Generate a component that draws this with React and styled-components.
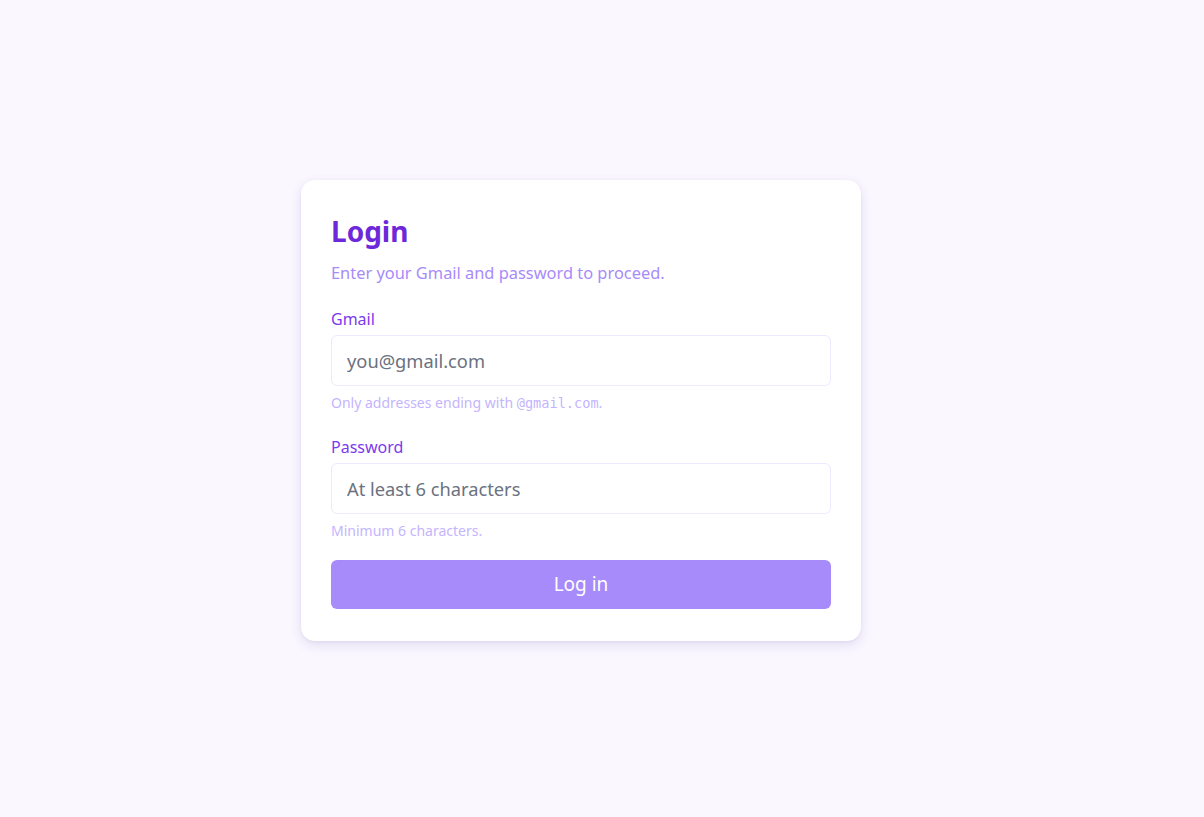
import React from "react";
import styled, { createGlobalStyle } from "styled-components";

const GlobalStyle = createGlobalStyle`
  html, body {
    margin: 0;
    padding: 0;
    background: #faf7ff;
    font-family: "Noto Sans", "Open Sans", sans-serif;
  }
  * { box-sizing: border-box; }
`;

const Page = styled.div`
  min-height: 817px;
  display: flex;
  align-items: center;
  justify-content: center;
  padding: 3px 42px 0 0;
`;

const Card = styled.form`
  width: 560px;
  background: #ffffff;
  border-radius: 14px;
  box-shadow: 0 4px 12px rgba(76, 29, 149, 0.12), 0 1px 3px rgba(76, 29, 149, 0.06);
  padding: 29px 30px 32px;
  display: flex;
  flex-direction: column;
`;

const Title = styled.h1`
  margin: 0;
  font-size: 28px;
  line-height: 44px;
  font-weight: 700;
  color: #6d28d9;
`;

const Subtitle = styled.p`
  margin: 8px 0 0;
  font-size: 16.4px;
  line-height: 24px;
  color: #a78bfa;
`;

const Field = styled.div`
  display: flex;
  flex-direction: column;
  margin-top: ${(p) => p.$top}px;
`;

const Label = styled.label`
  font-size: 16px;
  line-height: 22px;
  color: #7c3aed;
  margin-bottom: 5px;
`;

const Input = styled.input`
  height: 51px;
  width: 100%;
  border: 1px solid #ede9fe;
  border-radius: 6px;
  padding: 0 15px;
  font-family: inherit;
  font-size: 18.3px;
  color: #374151;
  background: #fff;
  outline: none;
  &::placeholder {
    color: #6b7280;
  }
`;

const Hint = styled.small`
  margin-top: 7px;
  font-size: 14px;
  line-height: 20px;
  color: #c4b5fd;
  code {
    font-family: "DejaVu Sans Mono", "Liberation Mono", monospace;
    font-size: 13.6px;
  }
`;

const Button = styled.button`
  margin-top: 19px;
  height: 49px;
  width: 100%;
  border: none;
  border-radius: 6px;
  background: #a78bfa;
  color: #ffffff;
  font-family: inherit;
  font-size: 19px;
  cursor: pointer;
`;

export default function App() {
  return (
    <>
      <GlobalStyle />
      <Page>
        <Card onSubmit={(e) => e.preventDefault()}>
          <Title>Login</Title>
          <Subtitle>Enter your Gmail and password to proceed.</Subtitle>
          <Field $top={23}>
            <Label htmlFor="gmail">Gmail</Label>
            <Input id="gmail" type="email" placeholder="you@gmail.com" />
            <Hint>
              Only addresses ending with <code>@gmail.com</code>.
            </Hint>
          </Field>
          <Field $top={23}>
            <Label htmlFor="password">Password</Label>
            <Input id="password" type="password" placeholder="At least 6 characters" />
            <Hint>Minimum 6 characters.</Hint>
          </Field>
          <Button type="submit">Log in</Button>
        </Card>
      </Page>
    </>
  );
}
